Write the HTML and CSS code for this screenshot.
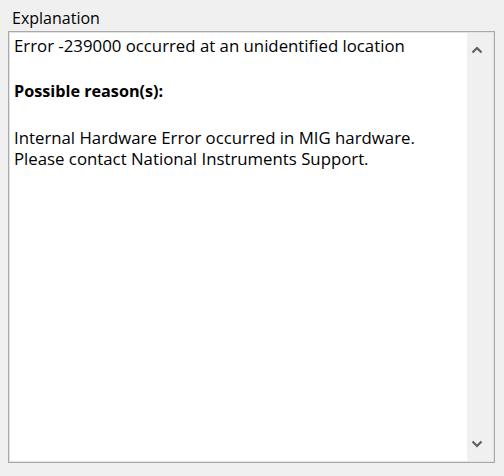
FILE: index.html
```html
<!DOCTYPE html>
<html>
<head>
<meta charset="utf-8">
<link rel="stylesheet" href="styles.css">
</head>
<body>
<div class="panel">
  <div class="label">Explanation</div>
  <div class="box">
    <div class="content">
      <p class="line">Error -239000 occurred at an unidentified location</p>
      <p class="line bold gap">Possible reason(s):</p>
      <p class="line gap">Internal Hardware Error occurred in MIG hardware.</p>
      <p class="line">Please contact National Instruments Support.</p>
    </div>
    <div class="scrollbar">
      <svg class="arrow" width="12" height="8" viewBox="0 0 12 8"><path d="M1.5 6.5 L6 2 L10.5 6.5" fill="none" stroke="#606060" stroke-width="2.2"/></svg>
      <svg class="arrow" width="12" height="8" viewBox="0 0 12 8"><path d="M1.5 1.5 L6 6 L10.5 1.5" fill="none" stroke="#606060" stroke-width="2.2"/></svg>
    </div>
  </div>
</div>
</body>
</html>
```
FILE: styles.css
```css
html, body {
  margin: 0;
  padding: 0;
  background: #f0f0f0;
}
body {
  font-family: "Open Sans", "Noto Sans", sans-serif;
  font-size: 16.8px;
  color: #000;
  width: 504px;
  height: 476px;
  overflow: hidden;
}
.panel {
  padding: 7px 9px 0 8px;
}
.label {
  font-size: 16px;
  padding-left: 4px;
  line-height: 22px;
  height: 22px;
}
.box {
  margin-top: 2px;
  height: 432px;
  border: 1px solid #a9a9a9;
  box-shadow: inset 1px 1px 0 #e3e3e3, inset -1px -1px 0 #e3e3e3;
  padding: 1px;
  display: flex;
  box-sizing: border-box;
  width: 487px;
}
.content {
  flex: 1;
  background: #fff;
  padding: 2px 4px;
}
.line {
  margin: 0;
  line-height: 21px;
  white-space: nowrap;
}
.bold {
  font-weight: bold;
  font-size: 16.2px;
}
.gap { margin-top: 25px; }
.scrollbar {
  width: 26px;
  background: #f0f0f0;
  display: flex;
  flex-direction: column;
  justify-content: space-between;
  align-items: center;
  padding: 13px 6px 13px 0;
  box-sizing: border-box;
}
.arrow { display: block; }
```
